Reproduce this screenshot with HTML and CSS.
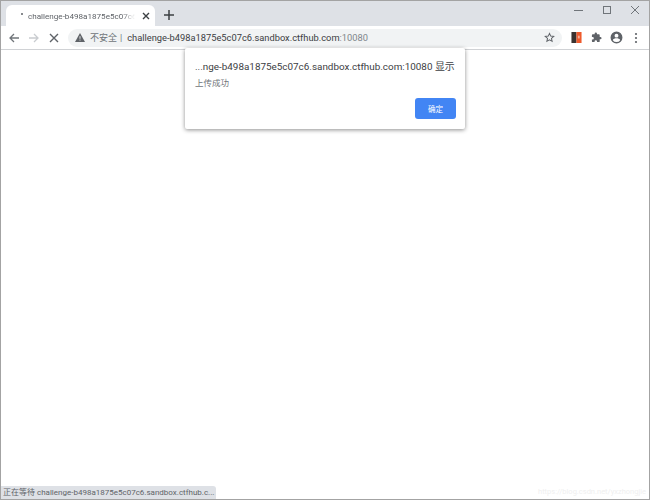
FILE: index.html
```html
<!DOCTYPE html>
<html lang="zh">
<head>
<meta charset="utf-8">
<title>challenge</title>
<link rel="stylesheet" href="styles.css">
</head>
<body>
<div class="window">
  <div class="tabstrip">
    <div class="tab">
      <span class="spinner"></span>
      <span class="tab-title">challenge-b498a1875e5c07c6</span>
      <svg class="tab-close" width="8" height="8" viewBox="0 0 8 8"><path d="M1 1l6 6M7 1L1 7" stroke="#3c4043" stroke-width="1.4"/></svg>
    </div>
    <svg class="newtab" width="10" height="10" viewBox="0 0 10 10"><path d="M5 0v10M0 5h10" stroke="#3c4043" stroke-width="1.5"/></svg>
    <div class="winctrls">
      <svg width="10" height="10" viewBox="0 0 10 10"><path d="M0 5.5h9" stroke="#70757a" stroke-width="1"/></svg>
      <svg width="10" height="10" viewBox="0 0 10 10"><rect x="1.5" y="1.5" width="7" height="7" fill="none" stroke="#70757a"/></svg>
      <svg width="10" height="10" viewBox="0 0 10 10"><path d="M1 1l8 8M9 1L1 9" stroke="#70757a" stroke-width="1"/></svg>
    </div>
  </div>
  <div class="toolbar">
    <svg class="navicon" width="12" height="12" viewBox="0 0 12 12"><path d="M11 6H2M6 2L2 6l4 4" fill="none" stroke="#70757a" stroke-width="1.3"/></svg>
    <svg class="navicon" width="12" height="12" viewBox="0 0 12 12"><path d="M1 6h9M6 2l4 4-4 4" fill="none" stroke="#c9ccd0" stroke-width="1.3"/></svg>
    <svg class="navicon" width="12" height="12" viewBox="0 0 12 12"><path d="M2 2l8 8M10 2l-8 8" fill="none" stroke="#5f6368" stroke-width="1.4"/></svg>
    <div class="omnibox">
      <svg class="warn" width="10" height="9" viewBox="0 0 10 9"><path d="M5 0l5 9H0z" fill="#5f6368"/><path d="M5 3.2v2.6M5 6.6v1" stroke="#f1f3f4" stroke-width=".9"/></svg>
      <span class="insecure">不安全</span>
      <span class="sep">|</span>
      <span class="url">challenge-b498a1875e5c07c6.sandbox.ctfhub.com<span class="port">:10080</span></span>
      <svg class="star" width="11" height="11" viewBox="0 0 24 24"><path d="M12 3l2.7 6 6.5.7-4.900 4.300 1.400 6.400L12 17.100 6.300 20.400l1.400-6.400-4.900-4.300 6.500-.7z" fill="none" stroke="#5f6368" stroke-width="2.2"/></svg>
    </div>
    <div class="extensions">
      <span class="ext-slot"><svg width="11" height="11" viewBox="0 0 11 12"><rect width="5.500" height="12" fill="#3a3330"/><rect x="5.500" width="5.500" height="12" fill="#ee5a2c"/><rect x="7" y="4" width="2" height="3" fill="#f7b09a"/></svg></span>
      <span class="ext-slot"><svg width="11" height="11" viewBox="0 0 24 24"><path d="M20.500 11H19V7a2 2 0 0 0-2-2h-4V3.500a2.500 2.500 0 0 0-5 0V5H4a2 2 0 0 0-2 2v3.800h1.500a2.700 2.700 0 0 1 0 5.400H2V20a2 2 0 0 0 2 2h3.800v-1.500a2.700 2.700 0 0 1 5.400 0V22H17a2 2 0 0 0 2-2v-4h1.500a2.500 2.500 0 0 0 0-5z" fill="#5f6368"/></svg></span>
      <span class="ext-slot"><svg width="13" height="13" viewBox="0 0 24 24"><path d="M12 1a11 11 0 1 0 0 22 11 11 0 0 0 0-22zm0 4a3.600 3.600 0 1 1 0 7.200A3.600 3.600 0 0 1 12 5zm0 15.500a8.500 8.500 0 0 1-6.800-3.500c.1-2.200 4.500-3.400 6.800-3.400s6.700 1.200 6.800 3.400a8.500 8.500 0 0 1-6.800 3.500z" fill="#5f6368"/></svg></span>
      <span class="ext-slot"><svg width="4" height="12" viewBox="0 0 4 12"><circle cx="2" cy="2" r="1.100" fill="#5f6368"/><circle cx="2" cy="6" r="1.100" fill="#5f6368"/><circle cx="2" cy="10" r="1.100" fill="#5f6368"/></svg></span>
    </div>
  </div>
  <div class="content"></div>

  <div class="dialog">
    <div class="dialog-title">...nge-b498a1875e5c07c6.sandbox.ctfhub.com:10080 显示</div>
    <div class="dialog-msg">上传成功</div>
    <div class="dialog-actions"><button class="ok">确定</button></div>
  </div>
  <div class="status">正在等待 challenge-b498a1875e5c07c6.sandbox.ctfhub.c...</div>
  <div class="watermark">https://blog.csdn.net/yxzhongjie</div>
</div>
</body>
</html>
```
FILE: styles.css
```css
* { box-sizing: border-box; }
html, body { margin: 0; padding: 0; }
body { font-family: Roboto, "Noto Sans CJK SC", sans-serif; background: #fff; }
.window {
  position: relative;
  width: 650px;
  height: 500px;
  overflow: hidden;
  display: flex;
  flex-direction: column;
  background: #fff;
  border: 1px solid #a3a3a3;
}
.tabstrip {
  height: 25px;
  flex: none;
  background: #dee1e6;
  display: flex;
  align-items: flex-end;
  padding-left: 5px;
}
.tab {
  width: 149px;
  height: 21px;
  background: #fff;
  border-radius: 6px 6px 0 0;
  display: flex;
  align-items: center;
  padding-left: 15px;
  gap: 5px;
}
.spinner { width: 2px; height: 2px; background: #5f6368; border-radius: 50%; margin-bottom: 3px; flex: none; }
.tab-title {
  width: 107px;
  font-size: 8.1px;
  line-height: 12px;
  color: #5f6368;
  white-space: nowrap;
  overflow: hidden;
  -webkit-mask-image: linear-gradient(to right, #000 88%, transparent);
  mask-image: linear-gradient(to right, #000 88%, transparent);
}
.tab-close { margin-left: 2px; flex: none; }
.newtab { margin: 0 0 6px 9px; flex: none; }
.winctrls {
  margin-left: auto;
  align-self: flex-start;
  display: flex;
  gap: 18px;
  padding: 4px 9px 0 0;
}
.toolbar {
  height: 24px;
  flex: none;
  background: #fff;
  border-bottom: 1px solid #d0d2d5;
  display: flex;
  align-items: center;
  padding-left: 7px;
  gap: 8px;
}
.navicon { flex: none; }
.omnibox {
  width: 494px;
  height: 18px;
  background: #f1f3f4;
  border-radius: 9px;
  display: flex;
  align-items: center;
  padding: 0 6px 0 7px;
  font-size: 9.3px;
  color: #3c4043;
  flex: none;
}
.warn { flex: none; margin-right: 5px; }
.insecure { color: #70757a; font-size: 9px; }
.sep { color: #70757a; margin: 0 5px 0 3px; font-size: 9px; }
.url { white-space: nowrap; }
.port { color: #80868b; }
.star { margin-left: auto; margin-right: 1px; flex: none; }
.extensions {
  display: flex;
  align-items: center;
  margin-left: -4px;
}
.ext-slot { width: 20px; display: flex; justify-content: center; align-items: center; }
.content { flex: 1; background: #fff; }
.dialog {
  position: absolute;
  left: 184px;
  top: 47px;
  width: 280px;
  height: 81px;
  background: #fff;
  border-radius: 2px;
  box-shadow: 0 1px 4px rgba(0,0,0,.45);
  padding: 12px 9px 0 10px;
  display: flex;
  flex-direction: column;
}
.dialog-title { font-size: 9.9px; line-height: 14px; color: #3c4043; white-space: nowrap; }
.dialog-msg { font-size: 8.500px; line-height: 12px; color: #70757a; margin-top: 3px; }
.dialog-actions { display: flex; justify-content: flex-end; margin-top: 9px; }
.ok {
  width: 41px;
  height: 21px;
  padding: 0;
  border: 0;
  border-radius: 3px;
  background: #4285f4;
  color: #fff;
  font: 7.500px Roboto, "Noto Sans CJK SC", sans-serif;
}
.status {
  position: absolute;
  left: -1px;
  bottom: 0;
  width: 216px;
  height: 13px;
  background: #dee1e6;
  border-radius: 0 3px 0 0;
  font-size: 8px;
  line-height: 13px;
  color: #5f6368;
  padding-left: 3px;
  white-space: nowrap;
}
.watermark {
  position: absolute;
  right: 3px;
  bottom: 1px;
  font-size: 7.500px;
  line-height: 12px;
  color: #efefef;
}
```
